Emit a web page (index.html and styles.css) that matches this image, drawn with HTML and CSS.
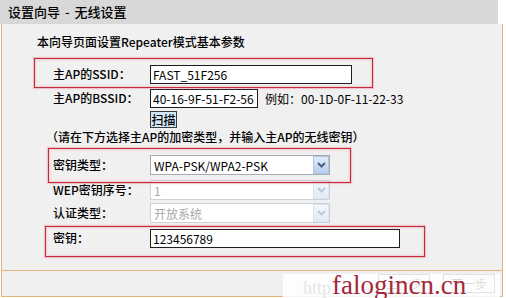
FILE: index.html
```html
<!DOCTYPE html>
<html lang="zh-CN">
<head>
  <meta charset="UTF-8">
  <title>设置向导 - 无线设置</title>
  <link rel="stylesheet" href="styles.css">
</head>
<body>
  <div class="page">
    <div class="title">设置向导 - 无线设置</div>

    <!-- Main form -->
    <div class="panel">
      <p class="intro">本向导页面设置Repeater模式基本参数</p>

      <div class="row row-ssid">
        <label>主AP的SSID：</label>
        <input class="text w-ssid" value="FAST_51F256">
      </div>
      <div class="row row-bssid">
        <label>主AP的BSSID：</label>
        <input class="text w-bssid" value="40-16-9F-51-F2-56">
        <span class="hint">例如：00-1D-0F-11-22-33</span>
      </div>
      <div class="row row-scan">
        <label></label>
        <button class="scan">扫描</button>
      </div>

      <p class="note">（请在下方选择主AP的加密类型，并输入主AP的无线密钥）</p>

      <div class="row row-type">
        <label>密钥类型：</label>
        <div class="select">
          <span class="value">WPA-PSK/WPA2-PSK</span>
          <span class="arrow"><svg width="9" height="6" viewBox="0 0 9 6"><path d="M1 1l3.5 3.5L8 1" fill="none" stroke="currentColor" stroke-width="2"/></svg></span>
        </div>
      </div>
      <div class="row row-wep">
        <label>WEP密钥序号：</label>
        <div class="select disabled">
          <span class="value">1</span>
          <span class="arrow"><svg width="9" height="6" viewBox="0 0 9 6"><path d="M1 1l3.5 3.5L8 1" fill="none" stroke="currentColor" stroke-width="2"/></svg></span>
        </div>
      </div>
      <div class="row row-auth">
        <label>认证类型：</label>
        <div class="select disabled">
          <span class="value">开放系统</span>
          <span class="arrow"><svg width="9" height="6" viewBox="0 0 9 6"><path d="M1 1l3.5 3.5L8 1" fill="none" stroke="currentColor" stroke-width="2"/></svg></span>
        </div>
      </div>
      <div class="row row-key">
        <label>密钥：</label>
        <input class="text w-key" value="123456789">
      </div>
    </div>

    <!-- Footer buttons -->
    <div class="footer">
      <button class="step">上一步</button>
      <button class="step">下一步</button>
    </div>

    <!-- Red annotation boxes -->
    <div class="mark mark-ssid"></div>
    <div class="mark mark-type"></div>
    <div class="mark mark-key"></div>

    <!-- Watermark -->
    <div class="watermark"><span class="faint">http</span>falogincn.cn</div>
  </div>
</body>
</html>
```

FILE: styles.css
```css
body {
  margin: 0;
  background: #fff;
  font-family: "Noto Sans CJK SC", sans-serif;
  font-size: 12px;
  font-weight: 500;
  color: #000;
}
.page {
  position: relative;
  width: 506px;
  height: 298px;
  overflow: hidden;
}
.title {
  width: 498px;
  height: 24px;
  box-sizing: border-box;
  padding-left: 8px;
  background: #d8d8d8;
  font-size: 13px;
  line-height: 24px;
  word-spacing: 2px;
}
.panel {
  margin-left: 1px;
  width: 502px;
  height: 247px;
  box-sizing: border-box;
  padding-top: 9px;
  background: #f0f0f0;
  border: 1px solid #e2b57a;
  border-top: none;
}
.intro {
  margin: 0 0 0 35px;
  line-height: 18px;
}
.note {
  margin: 0 0 0 44px;
  line-height: 18px;
}
.row {
  display: flex;
  align-items: center;
  height: 20px;
  padding-left: 51px;
}
.row label {
  flex: 0 0 97px;
  line-height: 18px;
}
.row-ssid { margin-top: 13px; }
.row-bssid { margin-top: 4px; }
.row-scan { margin-top: 3px; height: 17px; }
.row-type { margin-top: 9px; }
.row-wep { margin-top: 5px; }
.row-auth { margin-top: 3px; }
.row-key { margin-top: 5px; }

.text {
  height: 19px;
  box-sizing: border-box;
  margin: 0;
  padding: 0 2px;
  border: 1px solid #1e1e1e;
  background: #fff;
  font: inherit;
  font-weight: 400;
  color: #000;
  outline: none;
}
.w-ssid { width: 202px; }
.w-bssid { width: 108px; }
.w-key { width: 250px; }
.hint {
  margin-left: 7px;
  font-weight: 400;
}
.scan {
  height: 17px;
  width: 27px;
  padding: 0;
  border: 1px solid #3a3a3a;
  background: #d2e7f4;
  font: inherit;
  line-height: 15px;
}
.select {
  display: flex;
  align-items: center;
  justify-content: space-between;
  width: 180px;
  height: 20px;
  box-sizing: border-box;
  border: 1px solid #a5acb5;
  background: #fff;
  font-weight: 400;
}
.select .value {
  padding-left: 3px;
}
.select .arrow {
  display: flex;
  align-items: center;
  justify-content: center;
  width: 16px;
  height: 18px;
  box-sizing: border-box;
  border: 1px solid #b3c6de;
  background: linear-gradient(#e2ecf9, #b8cceb);
  color: #4b5d80;
}
.select.disabled {
  border-color: #cbd1d8;
}
.select.disabled .value {
  color: #a7a7a7;
}
.select.disabled .arrow {
  border-color: #dbe5f0;
  background: linear-gradient(#f3f7fc, #e2ebf6);
  color: #b9cade;
}

.footer {
  display: flex;
  justify-content: flex-end;
  align-items: center;
  gap: 13px;
  margin-left: 1px;
  width: 502px;
  height: 26px;
  box-sizing: border-box;
  padding-right: 7px;
  background: #f0f0f0;
  border: 1px solid #e2b57a;
  border-top: none;
}
.step {
  width: 52px;
  height: 19px;
  padding: 0;
  border: 1px solid #333;
  background: #f2f2f2;
  font: inherit;
  font-weight: 400;
}

.mark {
  position: absolute;
  border: 1px solid #c22c3b;
  box-shadow: 0 0 1px 1px rgba(232, 140, 150, 0.45), inset 0 0 2px 1px rgba(240, 170, 176, 0.5);
}
.mark-ssid { left: 34px; top: 58px; width: 337px; height: 28px; }
.mark-type { left: 48px; top: 148px; width: 301px; height: 33px; }
.mark-key { left: 45px; top: 226px; width: 378px; height: 29px; }

.watermark {
  position: absolute;
  left: 283px;
  top: 274px;
  width: 217px;
  height: 24px;
  box-sizing: border-box;
  padding-left: 20px;
  background: rgba(255, 255, 255, 0.86);
  font-family: "Liberation Serif", serif;
  font-size: 27px;
  font-weight: 400;
  line-height: 22px;
  color: #a3283a;
  white-space: nowrap;
}
.watermark .faint {
  font-size: 18px;
  color: #e6e6e6;
  margin-right: 1px;
}
```
